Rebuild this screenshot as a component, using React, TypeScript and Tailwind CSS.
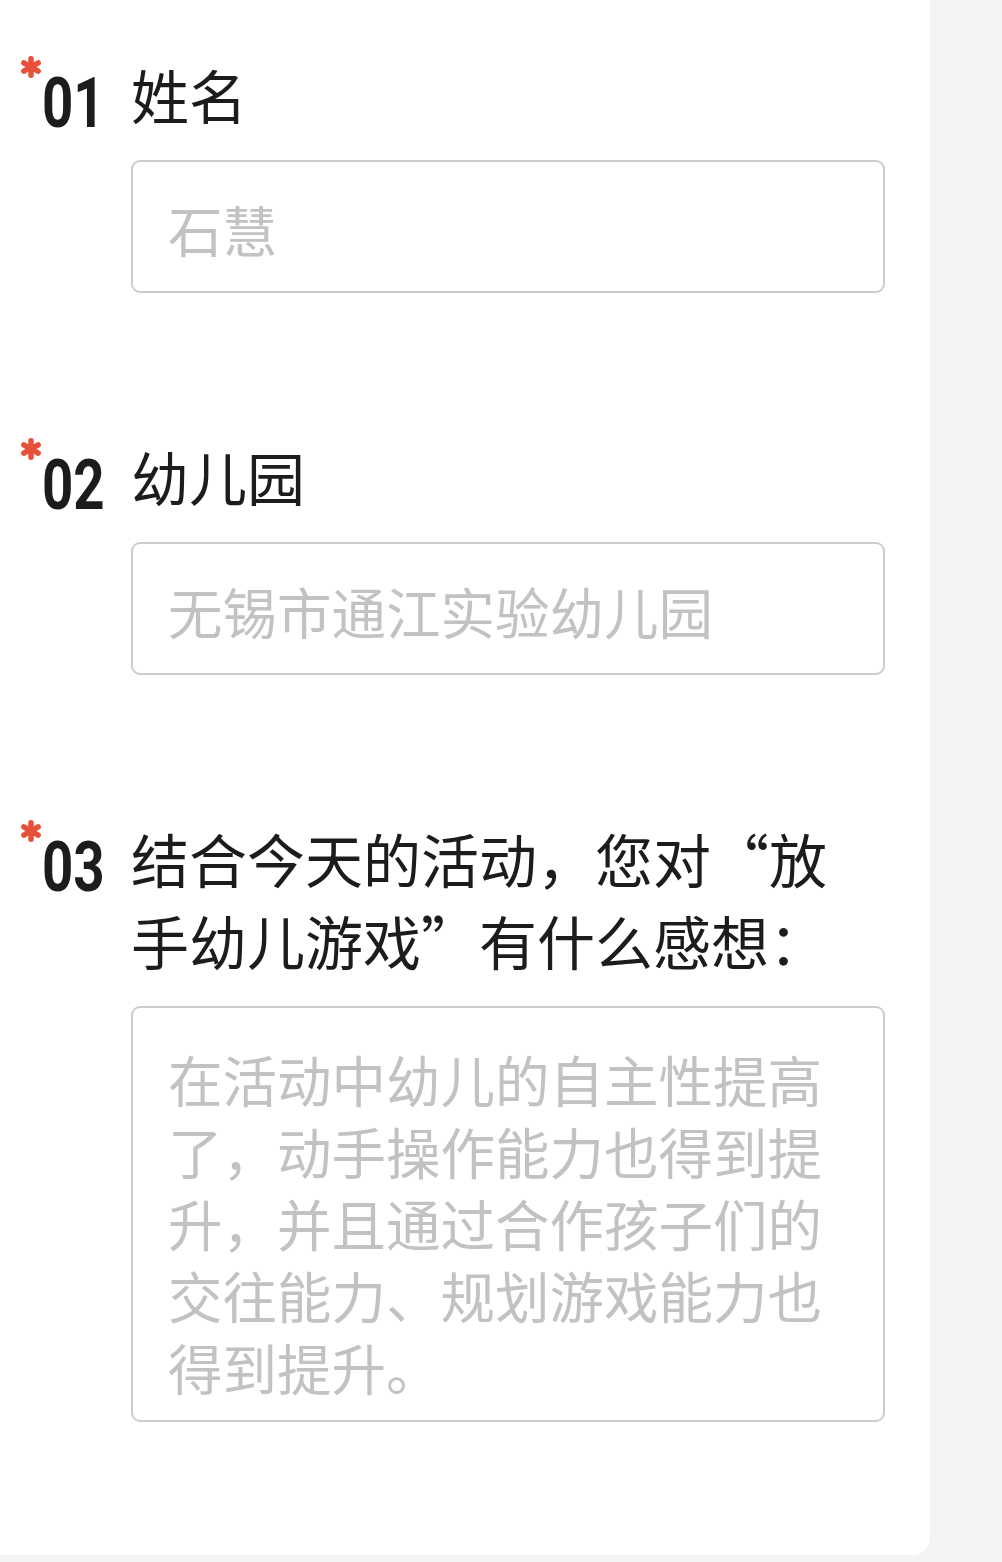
const cjk = "font-['Noto_Sans_CJK_SC','Noto_Sans',sans-serif]";

type Q = {
	no: string;
	label: string;
	value: string;
	multi?: boolean;
};

const questions: Q[] = [
	{ no: "01", label: "姓名", value: "石慧" },
	{ no: "02", label: "幼儿园", value: "无锡市通江实验幼儿园" },
	{
		no: "03",
		label: "结合今天的活动，您对“放手幼儿游戏”有什么感想：",
		value: "在活动中幼儿的自主性提高了，动手操作能力也得到提升，并且通过合作孩子们的交往能力、规划游戏能力也得到提升。",
		multi: true,
	},
];

function Star() {
	return (
		<svg viewBox="0 0 20 20" className="absolute -left-[22px] -top-[12px] h-[22px] w-[22px]">
			<g stroke="#e8503a" strokeWidth="5" strokeLinecap="round">
				<line x1="10" y1="2.5" x2="10" y2="17.5" />
				<line x1="3.5" y1="6.2" x2="16.5" y2="13.8" />
				<line x1="3.5" y1="13.8" x2="16.5" y2="6.2" />
			</g>
		</svg>
	);
}

function Question({ q }: { q: Q }) {
	return (
		<div className="flex flex-col">
			<div className="flex items-baseline">
				<div className="w-[131px] shrink-0 pl-[42px]">
					<span className="relative inline-block translate-y-[8px]">
						<Star />
						<span className="inline-block origin-left scale-x-[0.78] font-['Roboto',sans-serif] font-bold text-[70px] leading-none text-[#1c1c1c]">
							{q.no}
						</span>
					</span>
				</div>
				<div className={`w-[720px] text-[58px] leading-[82px] text-[#1c1c1c] ${cjk}`}>{q.label}</div>
			</div>
			<div
				className={`ml-[131px] mt-[25px] w-[754px] rounded-[9px] border-2 border-[#cccccc] px-[35px] ${cjk} text-[54.5px] text-[#c2c2c2] ${
					q.multi ? "h-[416px] pt-[35px] leading-[72px]" : "flex h-[133px] items-center pt-[6px] leading-none"
				}`}
			>
				{q.value}
			</div>
		</div>
	);
}

export default function App() {
	return (
		<div className="h-[1562px] w-[1002px] bg-[#f3f4f6]">
			<div className="flex h-[1555px] w-[930px] flex-col gap-[142px] rounded-br-[18px] bg-white pt-[53px]">
				{questions.map((q) => (
					<Question key={q.no} q={q} />
				))}
			</div>
		</div>
	);
}
